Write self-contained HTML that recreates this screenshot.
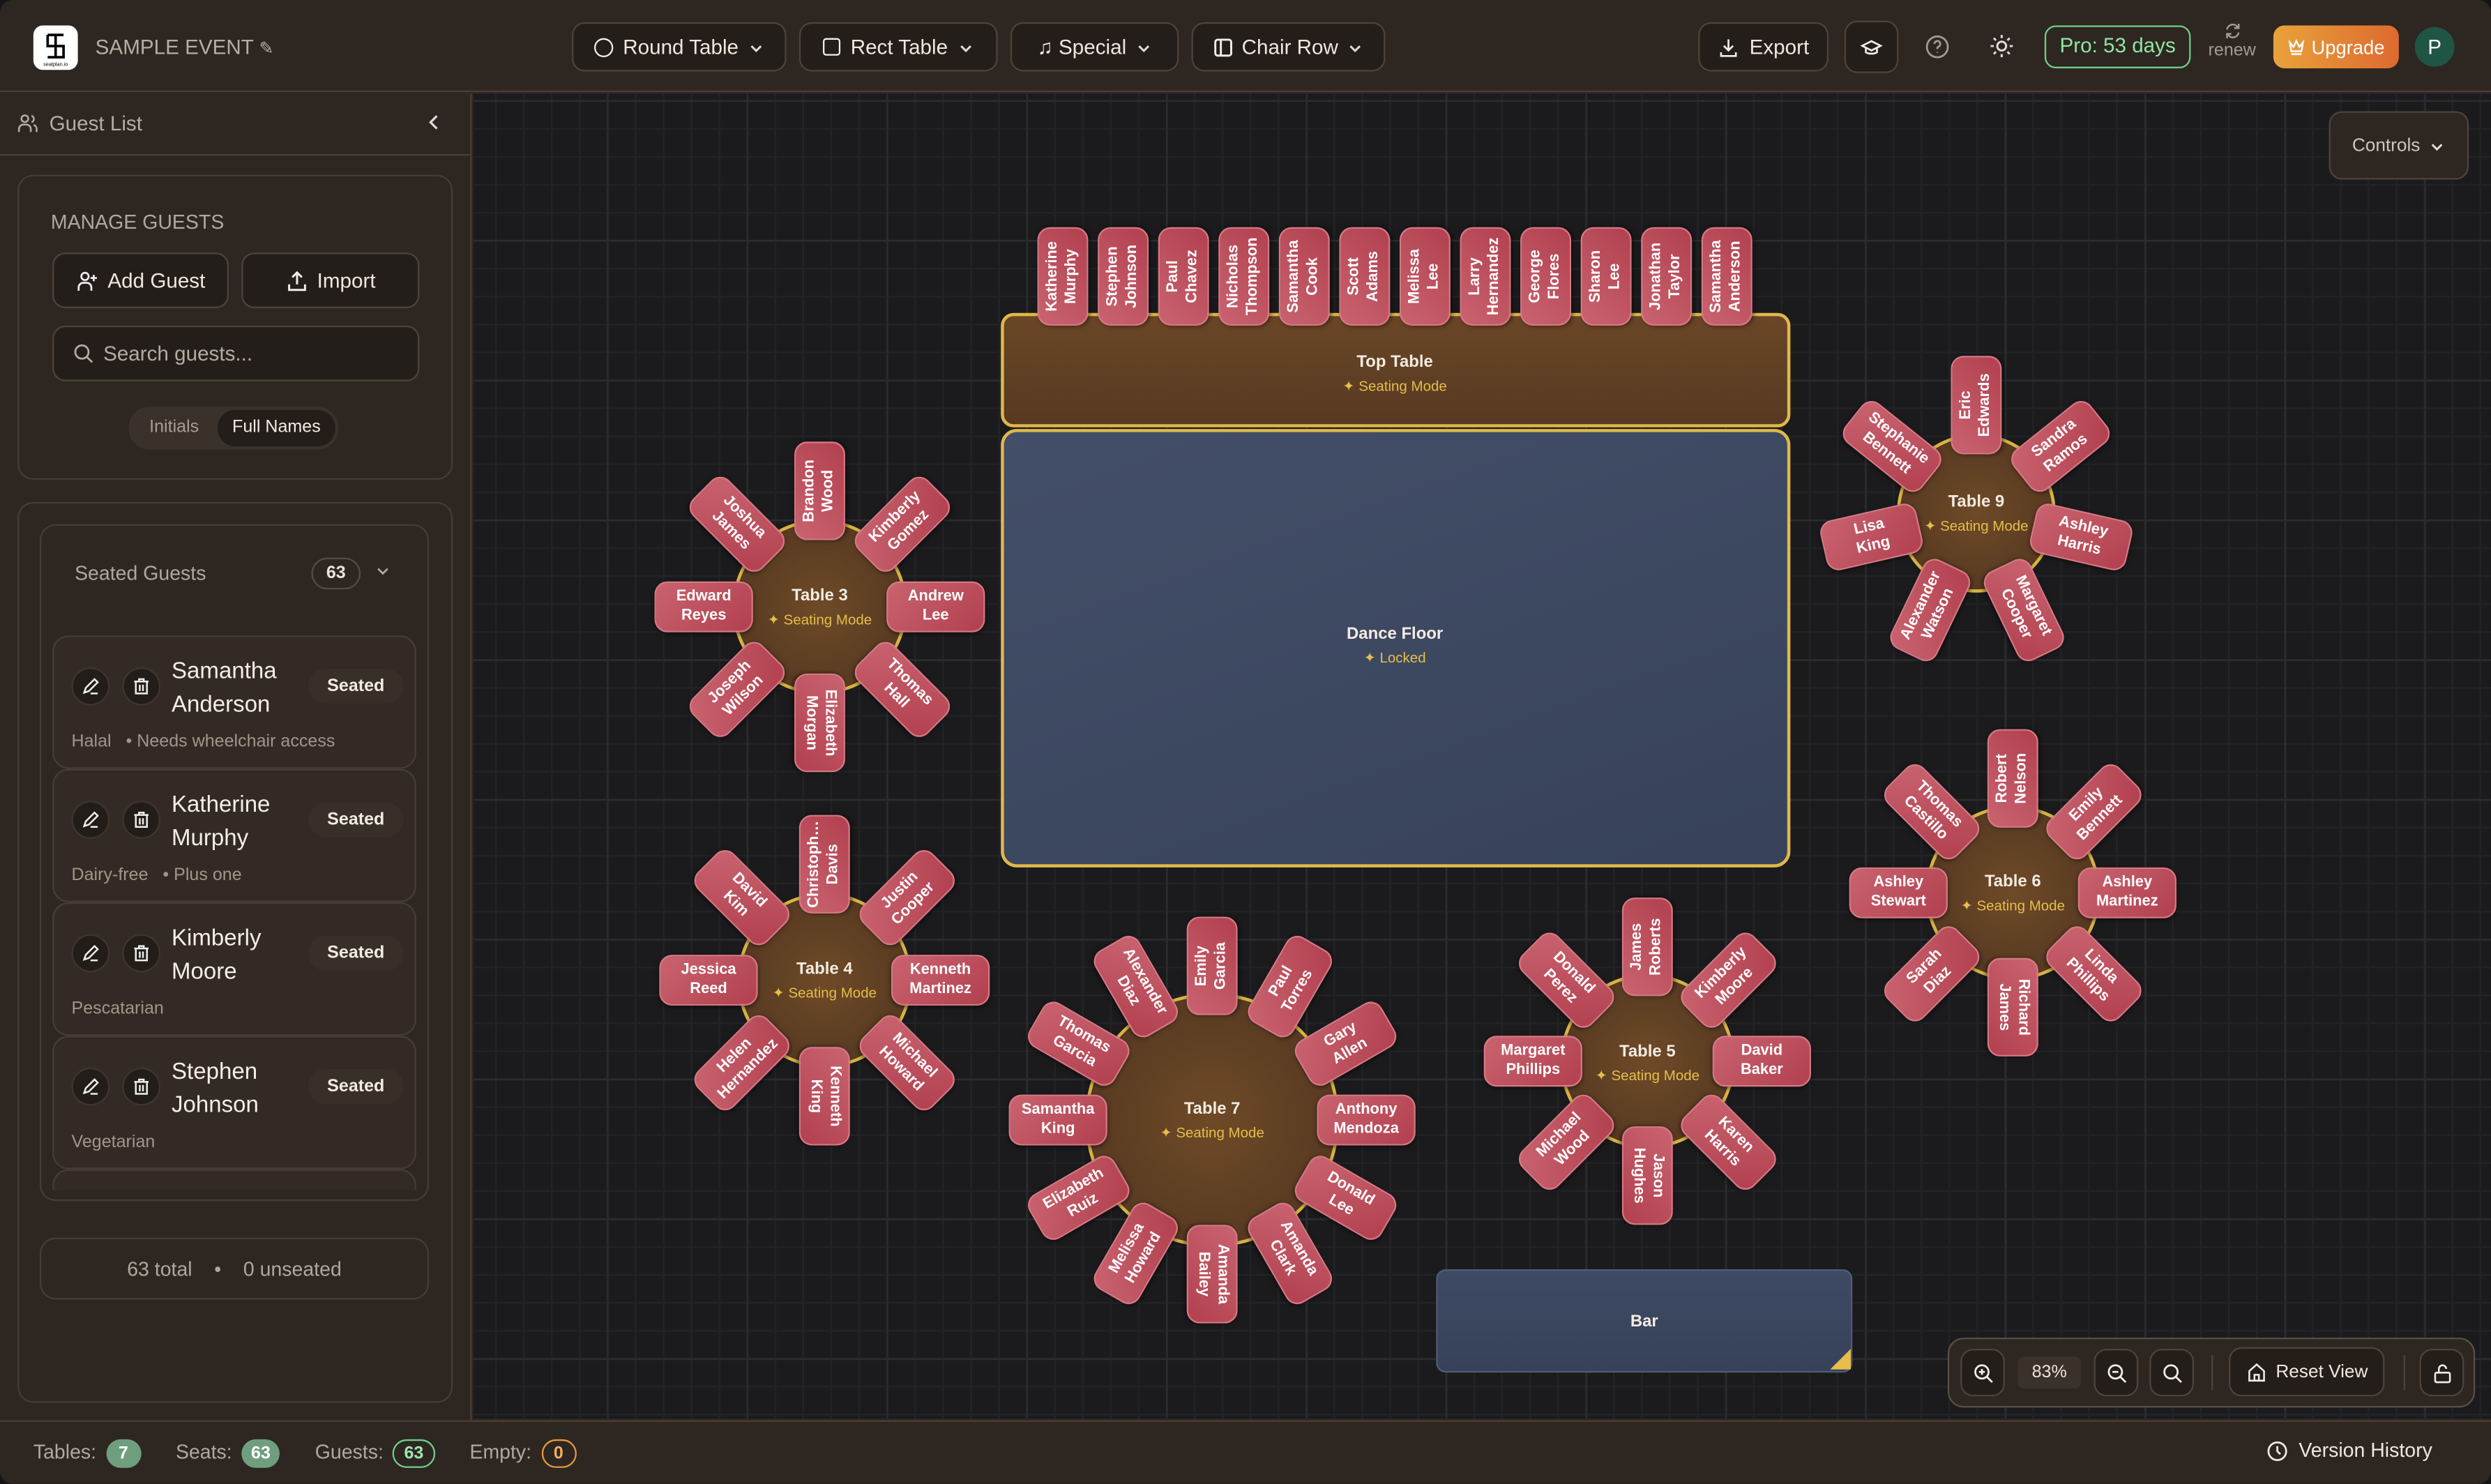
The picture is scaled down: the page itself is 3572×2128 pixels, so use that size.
<!DOCTYPE html>
<html><head><meta charset="utf-8">
<style>
*{box-sizing:border-box;margin:0;padding:0}
html,body{width:3572px;height:2128px;overflow:hidden;background:#141516}
#w{position:absolute;left:0;top:0;width:1568px;height:934px;transform:scale(2.27806);transform-origin:0 0;font-family:"Liberation Sans",sans-serif;color:#ece4da;background:#2e2621;border-radius:8px;overflow:hidden}
.abs{position:absolute}
.hdr{left:0;top:0;width:1568px;height:58px;background:#2e2621;border-bottom:1px solid #4a3f37}
.btn{position:absolute;border:1px solid #4d433b;background:#231e1a;border-radius:8px;display:flex;align-items:center;justify-content:center;gap:6px;font-size:13px;color:#efe8de}
.canvas{left:298px;top:59px;width:1270px;height:834px;background-color:#1b1b1d;
background-image:linear-gradient(#2b2c30 1px,transparent 1px),linear-gradient(90deg,#2b2c30 1px,transparent 1px),linear-gradient(#222326 1px,transparent 1px),linear-gradient(90deg,#222326 1px,transparent 1px);
background-size:88px 88px,88px 88px,17.6px 17.6px,17.6px 17.6px;background-position:-4px 4px}
.side{left:0;top:59px;width:297px;height:835px;background:#2e2621;border-right:1px solid #4a3f37}
.card{position:absolute;border:1px solid #463c35;border-radius:10px;background:#2e2621}
.s{position:absolute;width:62px;height:32px;border-radius:8px;background:linear-gradient(135deg,#c9636f,#b2404f);border:1px solid #d77884;box-shadow:0 1px 3px rgba(0,0,0,.5);color:#fff;font-size:9.6px;font-weight:bold;line-height:12px;display:flex;align-items:center;justify-content:center;text-align:center;white-space:nowrap;overflow:hidden}
.t{position:absolute;border-radius:50%;background:radial-gradient(circle,#6e4a27,#4f3420);border:2.5px solid #d9b444}
.lbl{position:absolute;width:140px;text-align:center;font-size:10.5px;font-weight:bold;color:#f3ebe0}
.lbl i{display:block;font-style:normal;font-weight:normal;font-size:9px;color:#e6be4a;margin-top:4px}
.gc{position:absolute;left:33px;width:229px;height:84px;border:1px solid #463c35;border-radius:10px;background:#332a25}
.ic{position:absolute;width:24px;height:24px;border-radius:50%;background:#221d19;border:1px solid #3e352f;display:flex;align-items:center;justify-content:center}
.gn{position:absolute;left:74px;top:12px;font-size:14.5px;line-height:21px;color:#f5eee5}
.st{position:absolute;left:160px;top:20px;width:60px;height:22px;border-radius:11px;background:#382f29;font-size:11px;font-weight:bold;display:flex;align-items:center;justify-content:center;color:#f2ebe2}
.nt{position:absolute;left:11px;top:60px;font-size:11px;color:#a39689}
.pill{display:inline-flex;align-items:center;justify-content:center;height:18px;min-width:22px;padding:0 6px;border-radius:9px;font-size:11px;font-weight:bold;margin-left:6px;margin-right:22px}
svg{display:block}
</style></head><body><div id="w">

<div class="abs hdr"></div>
<div class="abs" style="left:21px;top:16px;width:28px;height:28px;background:#fff;border-radius:6px">
<svg width="28" height="28" viewBox="0 0 28 28" fill="none" stroke="#000" stroke-width="1.6"><path d="M9 6h10M9 6v7h10v7H9M14 6v14M9 20h10"/><text x="14" y="25.5" font-size="3.2" text-anchor="middle" fill="#000" stroke="none" font-family="Liberation Sans">seatplan.io</text></svg></div>
<div class="abs" style="left:60px;top:22px;font-size:13px;color:#b8ada2">SAMPLE EVENT <span style="font-size:11px">✎</span></div>

<div class="btn" style="left:360px;top:14px;width:135px;height:31px"><span style="width:12px;height:12px;border:1.5px solid #eee;border-radius:50%"></span>Round Table <svg width="10" height="10" viewBox="0 0 10 10" fill="none" stroke="#ddd" stroke-width="1.3"><path d="M2 4l3 3 3-3"/></svg></div>
<div class="btn" style="left:503px;top:14px;width:125px;height:31px"><span style="width:11px;height:11px;border:1.5px solid #eee;border-radius:2px"></span>Rect Table <svg width="10" height="10" viewBox="0 0 10 10" fill="none" stroke="#ddd" stroke-width="1.3"><path d="M2 4l3 3 3-3"/></svg></div>
<div class="btn" style="left:636px;top:14px;width:106px;height:31px">♫ Special <svg width="10" height="10" viewBox="0 0 10 10" fill="none" stroke="#ddd" stroke-width="1.3"><path d="M2 4l3 3 3-3"/></svg></div>
<div class="btn" style="left:750px;top:14px;width:122px;height:31px"><svg width="12" height="12" viewBox="0 0 12 12" fill="none" stroke="#eee" stroke-width="1.3"><rect x="1" y="1" width="10" height="10" rx="1.5"/><path d="M4.5 1v10"/></svg>Chair Row <svg width="10" height="10" viewBox="0 0 10 10" fill="none" stroke="#ddd" stroke-width="1.3"><path d="M2 4l3 3 3-3"/></svg></div>

<div class="btn" style="left:1069px;top:14px;width:82px;height:31px"><svg width="14" height="14" viewBox="0 0 24 24" fill="none" stroke="#eee" stroke-width="2"><path d="M12 3v12M7 10l5 5 5-5M4 17v4h16v-4"/></svg>Export</div>
<div class="btn" style="left:1161px;top:13px;width:34px;height:33px"><svg width="14" height="14" viewBox="0 0 24 24" fill="none" stroke="#eee" stroke-width="2"><path d="M2 10l10-5 10 5-10 5z M6 12v5c3 2 9 2 12 0v-5"/></svg></div>
<div class="abs" style="left:1212px;top:22px"><svg width="15" height="15" viewBox="0 0 16 16" fill="none" stroke="#a49a8f" stroke-width="1.3"><circle cx="8" cy="8" r="7"/><path d="M6 6a2 2 0 1 1 2.5 2c-.5.3-.5.7-.5 1.5M8 11.5v.5"/></svg></div>
<div class="abs" style="left:1252px;top:21px"><svg width="16" height="16" viewBox="0 0 16 16" fill="none" stroke="#ddd" stroke-width="1.3"><circle cx="8" cy="8" r="2.8"/><path d="M8 1v2M8 13v2M1 8h2M13 8h2M3 3l1.4 1.4M11.6 11.6L13 13M3 13l1.4-1.4M11.6 4.4L13 3"/></svg></div>
<div class="abs" style="left:1287px;top:16px;width:92px;height:27px;border:1.5px solid #6fcf8a;border-radius:7px;color:#8ee6a3;font-size:13px;text-align:center;line-height:24px">Pro: 53 days</div>
<div class="abs" style="left:1388px;top:14px;width:34px;text-align:center;font-size:11px;color:#a59a8f;line-height:14px"><svg style="margin:0 auto" width="11" height="11" viewBox="0 0 12 12" fill="none" stroke="#a59a8f" stroke-width="1.2"><path d="M2 5a4 4 0 0 1 7-2l1 1M10 7a4 4 0 0 1-7 2L2 8M10 1v3H7M2 11V8h3"/></svg>renew</div>
<div class="abs" style="left:1431px;top:16px;width:79px;height:27px;border-radius:7px;background:linear-gradient(90deg,#e9a23b,#dd6a2e);color:#fff;font-size:12px;display:flex;align-items:center;justify-content:center;gap:4px"><svg width="11" height="11" viewBox="0 0 12 12" fill="none" stroke="#fff" stroke-width="1.2"><path d="M1.5 3l2.5 3 2-4 2 4 2.5-3-1 6h-7zM2.5 11h7"/></svg>Upgrade</div>
<div class="abs" style="left:1520px;top:17px;width:25px;height:25px;border-radius:50%;background:#1f5545;color:#fff;font-size:13px;text-align:center;line-height:25px">P</div>

<div class="abs side"></div>
<div class="abs" style="left:0;top:59px;width:297px;height:39px;border-bottom:1px solid #4a3f37"></div>
<div class="abs" style="left:11px;top:71px"><svg width="13" height="13" viewBox="0 0 14 14" fill="none" stroke="#b7aca1" stroke-width="1.2"><circle cx="5" cy="4" r="2.3"/><path d="M1 13v-2a3 3 0 0 1 3-3h2a3 3 0 0 1 3 3v2M9.5 2a2.3 2.3 0 0 1 0 4.4M11 8.2a3 3 0 0 1 2 2.8v2"/></svg></div>
<div class="abs" style="left:31px;top:70px;font-size:13px;color:#b7aca1">Guest List</div>
<div class="abs" style="left:269px;top:72px"><svg width="8" height="10" viewBox="0 0 8 10" fill="none" stroke="#ddd" stroke-width="1.4"><path d="M6 1L2 5l4 4"/></svg></div>

<div class="card" style="left:11px;top:110px;width:274px;height:192px"></div>
<div class="abs" style="left:32px;top:133px;font-size:12.5px;color:#b2a79c">MANAGE GUESTS</div>
<div class="btn" style="left:33px;top:159px;width:111px;height:35px"><svg width="14" height="14" viewBox="0 0 14 14" fill="none" stroke="#eee" stroke-width="1.2"><circle cx="5.5" cy="4" r="2.3"/><path d="M1.5 13v-2a3 3 0 0 1 3-3h2a3 3 0 0 1 3 3v2M11 3v4M9 5h4"/></svg>Add Guest</div>
<div class="btn" style="left:152px;top:159px;width:112px;height:35px"><svg width="14" height="14" viewBox="0 0 14 14" fill="none" stroke="#eee" stroke-width="1.3"><path d="M7 9V1.5M4 4.5l3-3 3 3M2 9v3.5h10V9"/></svg>Import</div>
<div class="btn" style="left:33px;top:205px;width:231px;height:35px;justify-content:flex-start;padding-left:12px;color:#b6aba0"><svg width="13" height="13" viewBox="0 0 14 14" fill="none" stroke="#b6aba0" stroke-width="1.3"><circle cx="6" cy="6" r="4.5"/><path d="M9.5 9.5L13 13"/></svg>Search guests...</div>
<div class="abs" style="left:81px;top:256px;width:132px;height:27px;border-radius:13px;background:#3a312b"></div>
<div class="abs" style="left:94px;top:263px;font-size:11px;color:#a99e93">Initials</div>
<div class="abs" style="left:137px;top:258px;width:74px;height:23px;border-radius:11px;background:#231e1a;font-size:11px;text-align:center;line-height:23px;color:#f3ece3">Full Names</div>

<div class="card" style="left:11px;top:316px;width:274px;height:567px"></div>
<div class="card" style="left:25px;top:330px;width:245px;height:426px;overflow:hidden"></div>
<div class="abs" style="left:47px;top:354px;font-size:12.5px;color:#b2a79c">Seated Guests</div>
<div class="abs" style="left:196px;top:351px;width:31px;height:20px;border:1px solid #564b43;border-radius:10px;font-size:11px;font-weight:bold;text-align:center;line-height:18px">63</div>
<div class="abs" style="left:236px;top:356px"><svg width="10" height="8" viewBox="0 0 10 8" fill="none" stroke="#aaa" stroke-width="1.2"><path d="M2 2l3 3 3-3"/></svg></div>

<div class="gc" style="top:400px"><div class="ic" style="left:11px;top:19px"><svg width="12" height="12" viewBox="0 0 12 12" fill="none" stroke="#eee" stroke-width="1.1"><path d="M2 10l1-3 5.5-5.5 2 2L5 9zM6 10.5h4.5"/></svg></div><div class="ic" style="left:43px;top:19px"><svg width="12" height="12" viewBox="0 0 12 12" fill="none" stroke="#eee" stroke-width="1.1"><path d="M1.5 3h9M4.5 3V1.5h3V3M2.5 3v7.5h7V3M5 5v4M7 5v4"/></svg></div><div class="gn">Samantha<br>Anderson</div><div class="st">Seated</div><div class="nt">Halal &nbsp;&nbsp;• Needs wheelchair access</div></div>
<div class="gc" style="top:484px"><div class="ic" style="left:11px;top:19px"><svg width="12" height="12" viewBox="0 0 12 12" fill="none" stroke="#eee" stroke-width="1.1"><path d="M2 10l1-3 5.5-5.5 2 2L5 9zM6 10.5h4.5"/></svg></div><div class="ic" style="left:43px;top:19px"><svg width="12" height="12" viewBox="0 0 12 12" fill="none" stroke="#eee" stroke-width="1.1"><path d="M1.5 3h9M4.5 3V1.5h3V3M2.5 3v7.5h7V3M5 5v4M7 5v4"/></svg></div><div class="gn">Katherine<br>Murphy</div><div class="st">Seated</div><div class="nt">Dairy-free &nbsp;&nbsp;• Plus one</div></div>
<div class="gc" style="top:568px"><div class="ic" style="left:11px;top:19px"><svg width="12" height="12" viewBox="0 0 12 12" fill="none" stroke="#eee" stroke-width="1.1"><path d="M2 10l1-3 5.5-5.5 2 2L5 9zM6 10.5h4.5"/></svg></div><div class="ic" style="left:43px;top:19px"><svg width="12" height="12" viewBox="0 0 12 12" fill="none" stroke="#eee" stroke-width="1.1"><path d="M1.5 3h9M4.5 3V1.5h3V3M2.5 3v7.5h7V3M5 5v4M7 5v4"/></svg></div><div class="gn">Kimberly<br>Moore</div><div class="st">Seated</div><div class="nt">Pescatarian</div></div>
<div class="gc" style="top:652px"><div class="ic" style="left:11px;top:19px"><svg width="12" height="12" viewBox="0 0 12 12" fill="none" stroke="#eee" stroke-width="1.1"><path d="M2 10l1-3 5.5-5.5 2 2L5 9zM6 10.5h4.5"/></svg></div><div class="ic" style="left:43px;top:19px"><svg width="12" height="12" viewBox="0 0 12 12" fill="none" stroke="#eee" stroke-width="1.1"><path d="M1.5 3h9M4.5 3V1.5h3V3M2.5 3v7.5h7V3M5 5v4M7 5v4"/></svg></div><div class="gn">Stephen<br>Johnson</div><div class="st">Seated</div><div class="nt">Vegetarian</div></div>
<div class="abs" style="left:33px;top:736px;width:229px;height:13px;border:1px solid #463c35;border-bottom:none;border-radius:10px 10px 0 0;background:#332a25"></div>

<div class="card" style="left:25px;top:779px;width:245px;height:39px;font-size:12.5px;color:#b2a79c;text-align:center;line-height:38px">63 total &nbsp;&nbsp;&nbsp;•&nbsp;&nbsp;&nbsp; 0 unseated</div>

<div class="abs" style="left:0;top:894px;width:1568px;height:40px;background:#2e2621;border-top:1px solid #4a3f37"></div>
<div class="abs" style="left:21px;top:906px;font-size:12.5px;color:#b2a79c;white-space:nowrap">Tables:<span class="pill" style="background:#6f9e7e;color:#fff">7</span>Seats:<span class="pill" style="background:#6f9e7e;color:#fff">63</span>Guests:<span class="pill" style="border:1.5px solid #6fcf8a;color:#9fe6b0">63</span>Empty:<span class="pill" style="border:1.5px solid #e39a3f;color:#f0b060">0</span></div>
<div class="abs" style="left:1427px;top:907px"><svg width="13" height="13" viewBox="0 0 14 14" fill="none" stroke="#efe8de" stroke-width="1.3"><circle cx="7" cy="7" r="6"/><path d="M7 3.5V7l2 2"/></svg></div>
<div class="abs" style="left:1447px;top:906px;font-size:12.5px;color:#efe8de">Version History</div>

<div class="abs canvas"></div>

<div class="btn" style="left:1466px;top:70px;width:88px;height:43px;color:#cfc5ba;font-size:11.5px;background:#2e2621">Controls <svg width="10" height="10" viewBox="0 0 10 10" fill="none" stroke="#ddd" stroke-width="1.3"><path d="M2 4l3 3 3-3"/></svg></div>

<div class="abs" style="left:630px;top:197px;width:497px;height:72px;border:2px solid #e0b84a;border-radius:8px;background:linear-gradient(#6a4626,#573a22)"></div>
<div class="lbl" style="left:808px;top:222px">Top Table<i>✦ Seating Mode</i></div>
<div class="s" style="left:638px;top:158px;transform:rotate(-90deg)">Katherine<br>Murphy</div>
<div class="s" style="left:676px;top:158px;transform:rotate(-90deg)">Stephen<br>Johnson</div>
<div class="s" style="left:714px;top:158px;transform:rotate(-90deg)">Paul<br>Chavez</div>
<div class="s" style="left:752px;top:158px;transform:rotate(-90deg)">Nicholas<br>Thompson</div>
<div class="s" style="left:790px;top:158px;transform:rotate(-90deg)">Samantha<br>Cook</div>
<div class="s" style="left:828px;top:158px;transform:rotate(-90deg)">Scott<br>Adams</div>
<div class="s" style="left:866px;top:158px;transform:rotate(-90deg)">Melissa<br>Lee</div>
<div class="s" style="left:904px;top:158px;transform:rotate(-90deg)">Larry<br>Hernandez</div>
<div class="s" style="left:942px;top:158px;transform:rotate(-90deg)">George<br>Flores</div>
<div class="s" style="left:980px;top:158px;transform:rotate(-90deg)">Sharon<br>Lee</div>
<div class="s" style="left:1018px;top:158px;transform:rotate(-90deg)">Jonathan<br>Taylor</div>
<div class="s" style="left:1056px;top:158px;transform:rotate(-90deg)">Samantha<br>Anderson</div>

<div class="abs" style="left:630px;top:270px;width:497px;height:276px;border:2.5px solid #e0b84a;border-radius:10px;background:linear-gradient(160deg,#434e68,#37425a)"></div>
<div class="lbl" style="left:808px;top:393px">Dance Floor<i>✦ Locked</i></div>

<div class="abs" style="left:904px;top:799px;width:262px;height:65px;border:1px solid #515c77;border-radius:6px;background:linear-gradient(#3e4963,#37425a)"></div>
<div class="abs" style="left:1152px;top:849px;width:0;height:0;border-left:13px solid transparent;border-bottom:13px solid #e6be4a"></div>
<div class="lbl" style="left:965px;top:826px">Bar</div>

<div class="t" style="left:461px;top:327px;width:110px;height:110px"></div>
<div class="lbl" style="left:446px;top:369px">Table 3<i>✦ Seating Mode</i></div>
<div class="s" style="left:485px;top:293px;transform:rotate(-90deg)">Brandon<br>Wood</div>
<div class="s" style="left:536.6px;top:314.4px;transform:rotate(-45deg)">Kimberly<br>Gomez</div>
<div class="s" style="left:558px;top:366px">Andrew<br>Lee</div>
<div class="s" style="left:536.6px;top:417.6px;transform:rotate(45deg)">Thomas<br>Hall</div>
<div class="s" style="left:485px;top:439px;transform:rotate(90deg)">Elizabeth<br>Morgan</div>
<div class="s" style="left:433.4px;top:417.6px;transform:rotate(-45deg)">Joseph<br>Wilson</div>
<div class="s" style="left:412px;top:366px">Edward<br>Reyes</div>
<div class="s" style="left:433.4px;top:314.4px;transform:rotate(45deg)">Joshua<br>James</div>

<div class="t" style="left:464px;top:562px;width:110px;height:110px"></div>
<div class="lbl" style="left:449px;top:604px">Table 4<i>✦ Seating Mode</i></div>
<div class="s" style="left:488px;top:528px;transform:rotate(-90deg)">Christoph…<br>Davis</div>
<div class="s" style="left:539.6px;top:549.4px;transform:rotate(-45deg)">Justin<br>Cooper</div>
<div class="s" style="left:561px;top:601px">Kenneth<br>Martinez</div>
<div class="s" style="left:539.6px;top:652.6px;transform:rotate(45deg)">Michael<br>Howard</div>
<div class="s" style="left:488px;top:674px;transform:rotate(90deg)">Kenneth<br>King</div>
<div class="s" style="left:436.4px;top:652.6px;transform:rotate(-45deg)">Helen<br>Hernandez</div>
<div class="s" style="left:415px;top:601px">Jessica<br>Reed</div>
<div class="s" style="left:436.4px;top:549.4px;transform:rotate(45deg)">David<br>Kim</div>

<div class="t" style="left:1194px;top:273px;width:100px;height:100px"></div>
<div class="lbl" style="left:1174px;top:310px">Table 9<i>✦ Seating Mode</i></div>
<div class="s" style="left:1213px;top:239px;transform:rotate(-90deg)">Eric<br>Edwards</div>
<div class="s" style="left:1266.2px;top:264.6px;transform:rotate(-38.6deg)">Sandra<br>Ramos</div>
<div class="s" style="left:1279.3px;top:322.1px;transform:rotate(12.9deg)">Ashley<br>Harris</div>
<div class="s" style="left:1242.5px;top:368.3px;transform:rotate(64.3deg)">Margaret<br>Cooper</div>
<div class="s" style="left:1183.5px;top:368.3px;transform:rotate(-64.3deg)">Alexander<br>Watson</div>
<div class="s" style="left:1146.7px;top:322.1px;transform:rotate(-12.9deg)">Lisa<br>King</div>
<div class="s" style="left:1159.8px;top:264.6px;transform:rotate(38.6deg)">Stephanie<br>Bennett</div>

<div class="t" style="left:1212px;top:507px;width:110px;height:110px"></div>
<div class="lbl" style="left:1197px;top:549px">Table 6<i>✦ Seating Mode</i></div>
<div class="s" style="left:1236px;top:474px;transform:rotate(-90deg)">Robert<br>Nelson</div>
<div class="s" style="left:1286.9px;top:495.1px;transform:rotate(-45deg)">Emily<br>Bennett</div>
<div class="s" style="left:1308px;top:546px">Ashley<br>Martinez</div>
<div class="s" style="left:1286.9px;top:596.9px;transform:rotate(45deg)">Linda<br>Phillips</div>
<div class="s" style="left:1236px;top:618px;transform:rotate(90deg)">Richard<br>James</div>
<div class="s" style="left:1185.1px;top:596.9px;transform:rotate(-45deg)">Sarah<br>Diaz</div>
<div class="s" style="left:1164px;top:546px">Ashley<br>Stewart</div>
<div class="s" style="left:1185.1px;top:495.1px;transform:rotate(45deg)">Thomas<br>Castillo</div>

<div class="t" style="left:982px;top:613px;width:110px;height:110px"></div>
<div class="lbl" style="left:967px;top:656px">Table 5<i>✦ Seating Mode</i></div>
<div class="s" style="left:1006px;top:580px;transform:rotate(-90deg)">James<br>Roberts</div>
<div class="s" style="left:1056.9px;top:601.1px;transform:rotate(-45deg)">Kimberly<br>Moore</div>
<div class="s" style="left:1078px;top:652px">David<br>Baker</div>
<div class="s" style="left:1056.9px;top:702.9px;transform:rotate(45deg)">Karen<br>Harris</div>
<div class="s" style="left:1006px;top:724px;transform:rotate(90deg)">Jason<br>Hughes</div>
<div class="s" style="left:955.1px;top:702.9px;transform:rotate(-45deg)">Michael<br>Wood</div>
<div class="s" style="left:934px;top:652px">Margaret<br>Phillips</div>
<div class="s" style="left:955.1px;top:601.1px;transform:rotate(45deg)">Donald<br>Perez</div>

<div class="t" style="left:683px;top:625px;width:160px;height:160px"></div>
<div class="lbl" style="left:693px;top:692px">Table 7<i>✦ Seating Mode</i></div>
<div class="s" style="left:732px;top:592px;transform:rotate(-90deg)">Emily<br>Garcia</div>
<div class="s" style="left:780.5px;top:605px;transform:rotate(-60deg)">Paul<br>Torres</div>
<div class="s" style="left:816px;top:640.5px;transform:rotate(-30deg)">Gary<br>Allen</div>
<div class="s" style="left:829px;top:689px">Anthony<br>Mendoza</div>
<div class="s" style="left:816px;top:737.5px;transform:rotate(30deg)">Donald<br>Lee</div>
<div class="s" style="left:780.5px;top:773px;transform:rotate(60deg)">Amanda<br>Clark</div>
<div class="s" style="left:732px;top:786px;transform:rotate(90deg)">Amanda<br>Bailey</div>
<div class="s" style="left:683.5px;top:773px;transform:rotate(-60deg)">Melissa<br>Howard</div>
<div class="s" style="left:648px;top:737.5px;transform:rotate(-30deg)">Elizabeth<br>Ruiz</div>
<div class="s" style="left:635px;top:689px">Samantha<br>King</div>
<div class="s" style="left:648px;top:640.5px;transform:rotate(30deg)">Thomas<br>Garcia</div>
<div class="s" style="left:683.5px;top:605px;transform:rotate(60deg)">Alexander<br>Diaz</div>

<div class="abs" style="left:1226px;top:842px;width:332px;height:44px;border:1px solid #5a4e45;border-radius:10px;background:#2e2621"></div>
<div class="btn" style="left:1234px;top:849px;width:28px;height:30px"><svg width="13" height="13" viewBox="0 0 14 14" fill="none" stroke="#eee" stroke-width="1.3"><circle cx="6" cy="6" r="4.5"/><path d="M9.5 9.5L13 13M6 4v4M4 6h4"/></svg></div>
<div class="abs" style="left:1270px;top:854px;width:40px;height:20px;border-radius:4px;background:#3a312b;font-size:11px;text-align:center;line-height:20px">83%</div>
<div class="btn" style="left:1318px;top:849px;width:28px;height:30px"><svg width="13" height="13" viewBox="0 0 14 14" fill="none" stroke="#eee" stroke-width="1.3"><circle cx="6" cy="6" r="4.5"/><path d="M9.5 9.5L13 13M4 6h4"/></svg></div>
<div class="btn" style="left:1353px;top:849px;width:28px;height:30px"><svg width="13" height="13" viewBox="0 0 14 14" fill="none" stroke="#eee" stroke-width="1.3"><circle cx="6" cy="6" r="4.5"/><path d="M9.5 9.5L13 13"/></svg></div>
<div class="abs" style="left:1392px;top:853px;width:1px;height:22px;background:#4d433b"></div>
<div class="btn" style="left:1403px;top:848px;width:98px;height:31px;font-size:11.5px"><svg width="13" height="13" viewBox="0 0 14 14" fill="none" stroke="#eee" stroke-width="1.2"><path d="M2 6.5L7 2l5 4.5V13H2zM5.5 13V9h3v4"/></svg>Reset View</div>
<div class="abs" style="left:1513px;top:853px;width:1px;height:22px;background:#4d433b"></div>
<div class="btn" style="left:1523px;top:849px;width:28px;height:30px"><svg width="13" height="13" viewBox="0 0 14 14" fill="none" stroke="#eee" stroke-width="1.2"><rect x="2" y="6.5" width="10" height="6.5" rx="1"/><path d="M4.5 6.5V4a2.5 2.5 0 0 1 5 0"/></svg></div>

</div></body></html>
